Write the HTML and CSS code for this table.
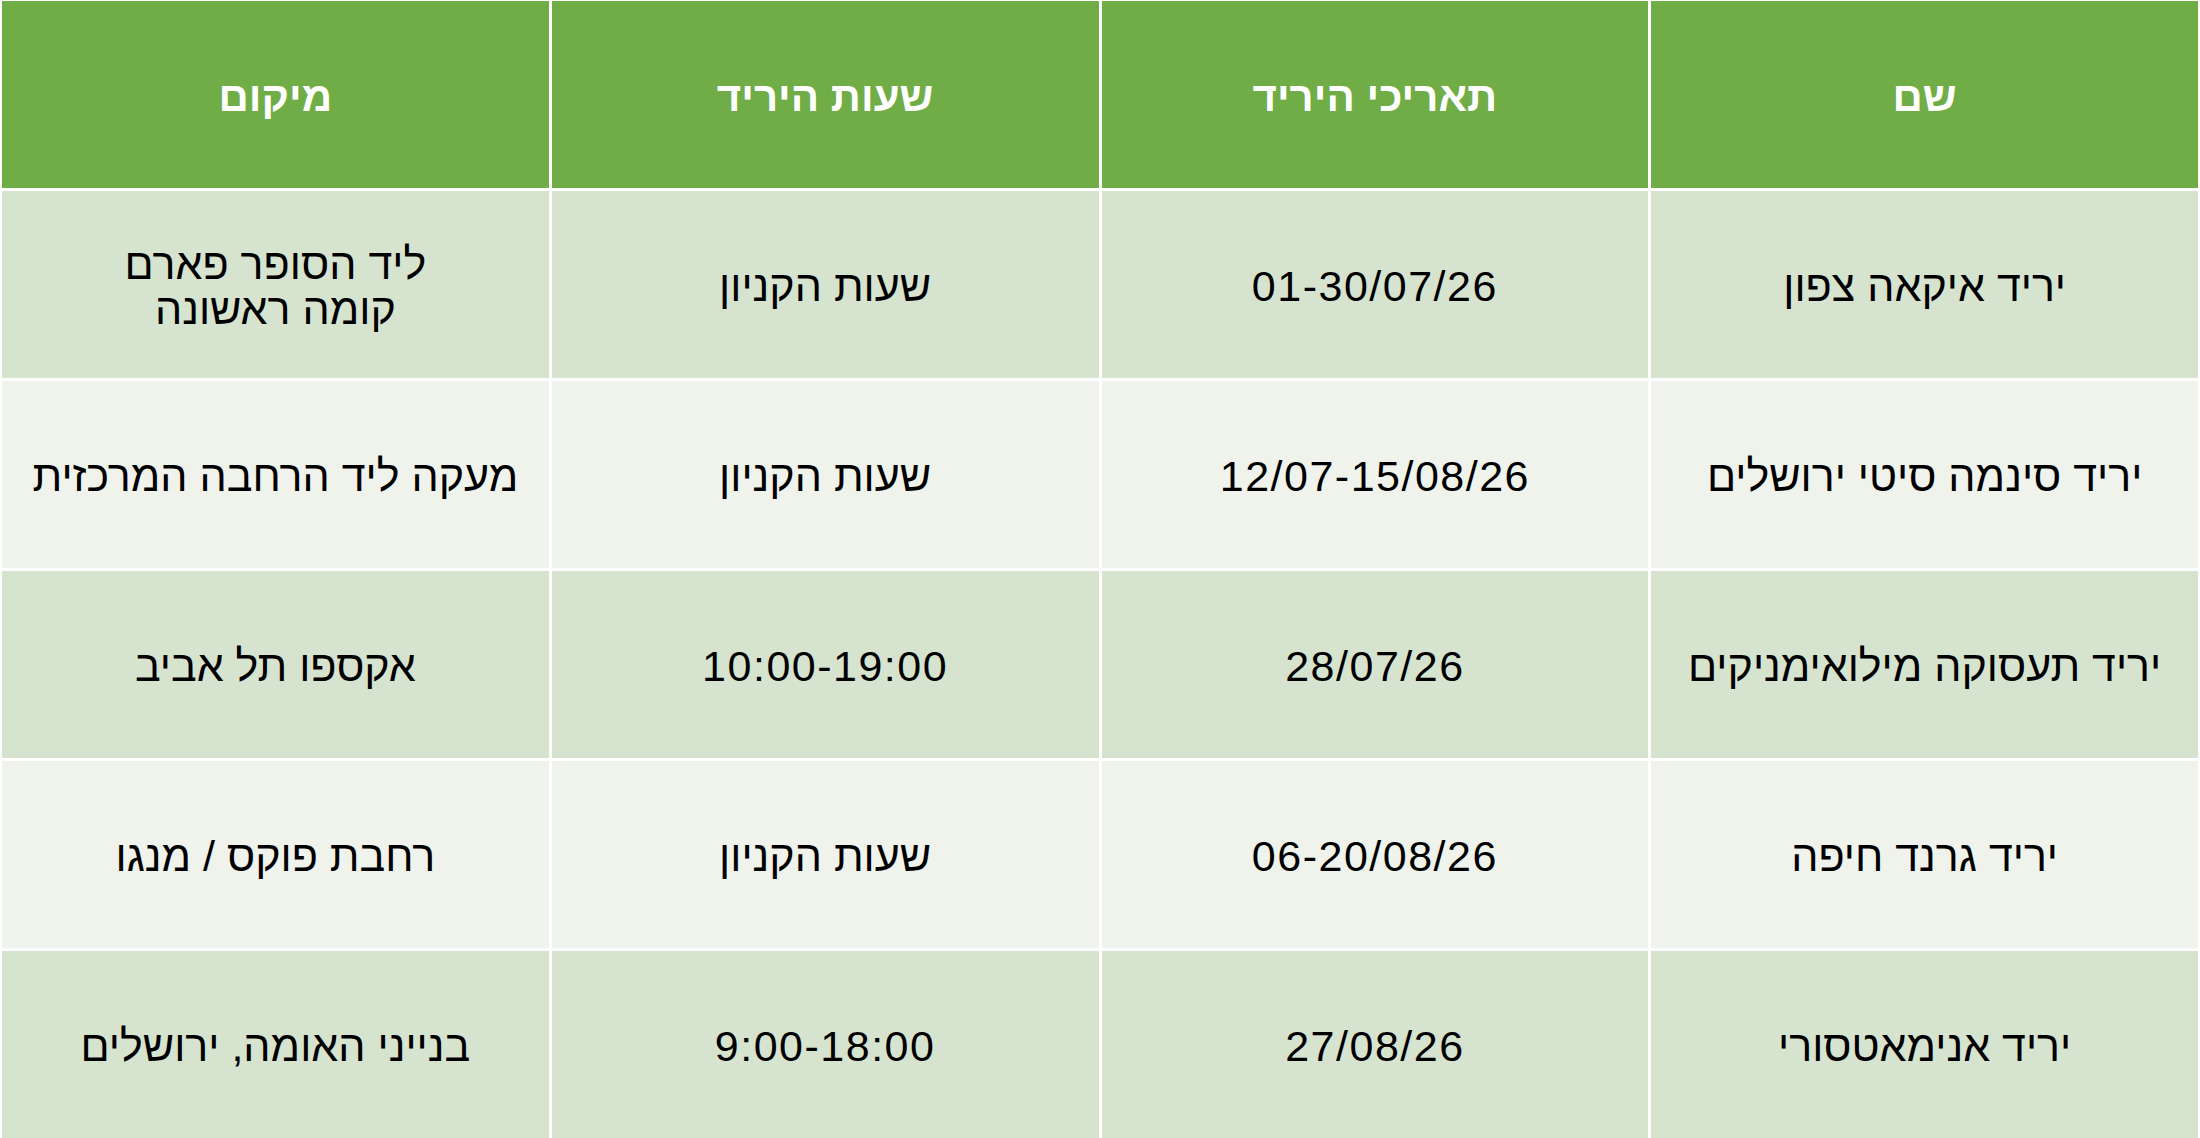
FILE: index.html
```html
<!DOCTYPE html>
<html lang="he" dir="rtl">
<head>
<meta charset="utf-8">
<title>ירידים</title>
<link rel="stylesheet" href="styles.css">
</head>
<body>
<div class="table">
  <div class="cell head">שם</div>
  <div class="cell head">תאריכי היריד</div>
  <div class="cell head">שעות היריד</div>
  <div class="cell head">מיקום</div>

  <div class="cell odd">יריד איקאה צפון</div>
  <div class="cell odd num">01-30/07/26</div>
  <div class="cell odd">שעות הקניון</div>
  <div class="cell odd">ליד הסופר פארם<br>קומה ראשונה</div>

  <div class="cell even">יריד סינמה סיטי ירושלים</div>
  <div class="cell even num">12/07-15/08/26</div>
  <div class="cell even">שעות הקניון</div>
  <div class="cell even">מעקה ליד הרחבה המרכזית</div>

  <div class="cell odd">יריד תעסוקה מילואימניקים</div>
  <div class="cell odd num">28/07/26</div>
  <div class="cell odd num">10:00-19:00</div>
  <div class="cell odd">אקספו תל אביב</div>

  <div class="cell even">יריד גרנד חיפה</div>
  <div class="cell even num">06-20/08/26</div>
  <div class="cell even">שעות הקניון</div>
  <div class="cell even">רחבת פוקס / מנגו</div>

  <div class="cell odd">יריד אנימאטסורי</div>
  <div class="cell odd num">27/08/26</div>
  <div class="cell odd num">9:00-18:00</div>
  <div class="cell odd">בנייני האומה, ירושלים</div>
</div>
</body>
</html>
```

FILE: styles.css
```css
html, body {
  margin: 0;
  padding: 0;
  background: #ffffff;
}

.table {
  box-sizing: border-box;
  width: 2200px;
  height: 1138px;
  padding: 1px 2px 0 2px;
  display: grid;
  grid-template-columns: repeat(4, 1fr);
  grid-template-rows: repeat(6, 1fr);
  gap: 3px;
  background: #ffffff;
  font-family: "Liberation Sans", "DejaVu Sans", sans-serif;
}

.cell {
  box-sizing: border-box;
  display: flex;
  align-items: center;
  justify-content: center;
  text-align: center;
  padding-top: 5px;
  font-size: 43px;
  line-height: 1.05;
  color: #000000;
}

.cell.num {
  letter-spacing: 1.5px;
}

.cell.head {
  background: #70ad47;
  color: #ffffff;
  font-weight: bold;
  font-size: 42px;
}

.cell.odd {
  background: #d6e3cf;
}

.cell.even {
  background: #eff3ec;
}
```
